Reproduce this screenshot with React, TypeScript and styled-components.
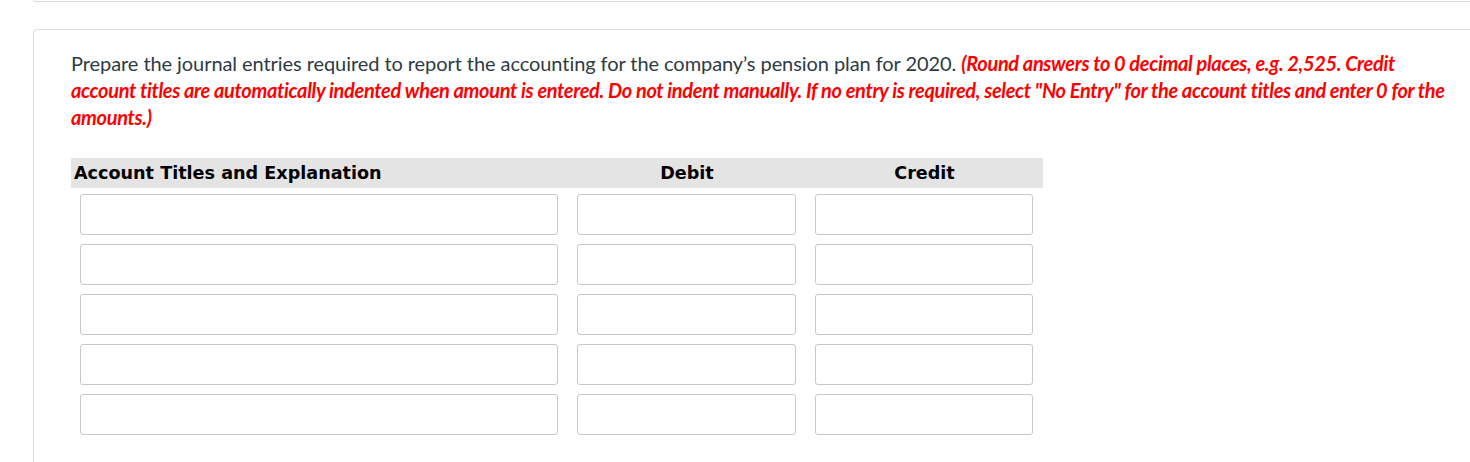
import React from 'react';
import styled, { createGlobalStyle } from 'styled-components';

const GlobalStyle = createGlobalStyle`
  body {
    margin: 0;
    background: #fff;
    overflow: hidden;
    font-family: Lato, "Liberation Sans", sans-serif;
  }
`;

const Page = styled.div`
  width: 1470px;
  height: 462px;
  overflow: hidden;
`;

const PrevCard = styled.div`
  margin-left: 33px;
  width: 1460px;
  height: 1px;
  border: 1px solid #dcdcdc;
  border-top: none;
  border-radius: 0 0 4px 4px;
`;

const Card = styled.div`
  margin: 27px 0 0 33px;
  width: 1460px;
  height: 460px;
  border: 1px solid #dcdcdc;
  border-radius: 4px;
  padding: 20px 0 0 37px;
  box-sizing: border-box;
`;

const Prompt = styled.p`
  margin: 0 0 27px;
  width: 1392px;
  font-size: 20px;
  line-height: 27px;
  letter-spacing: -0.07px;
  color: #2d3b45;
`;

const Note = styled.span`
  color: #f00;
  font-weight: 700;
  font-style: italic;
  letter-spacing: -0.35px;
`;

const Grid = styled.div`
  display: grid;
  grid-template-columns: 497px 238px 237px;
  width: 972px;
`;

const HeadCell = styled.div<{ $align?: 'left' | 'center' }>`
  height: 30px;
  line-height: 31px;
  background: #e4e4e4;
  padding-left: ${({ $align }) => ($align === 'left' ? '3px' : '0')};
  text-align: ${({ $align }) => $align || 'center'};
  font-family: "DejaVu Sans", Verdana, sans-serif;
  font-weight: 700;
  font-size: 17.6px;
  color: #000;
  margin-bottom: 6px;
`;

const Cell = styled.div`
  padding: 0 10px 9px 9px;
`;

const Field = styled.input`
  display: block;
  width: 100%;
  height: 41px;
  box-sizing: border-box;
  border: 1px solid #c8c8c8;
  border-radius: 3px;
  background: #fff;
  font-family: inherit;
  font-size: 16px;
  outline: none;
`;

const rows = [0, 1, 2, 3, 4];

export default function App() {
  return (
    <Page>
      <GlobalStyle />
      <PrevCard />
      <Card>
        <Prompt>
          Prepare the journal entries required to report the accounting for the company’s pension plan for 2020.{' '}
          <Note>
            (Round answers to 0 decimal places, e.g. 2,525. Credit account titles are automatically indented when
            amount is entered. Do not indent manually. If no entry is required, select "No Entry" for the account
            titles and enter 0 for the amounts.)
          </Note>
        </Prompt>
        <Grid>
          <HeadCell $align="left">Account Titles and Explanation</HeadCell>
          <HeadCell>Debit</HeadCell>
          <HeadCell>Credit</HeadCell>
          {rows.map((r) => (
            <React.Fragment key={r}>
              <Cell>
                <Field type="text" />
              </Cell>
              <Cell>
                <Field type="text" />
              </Cell>
              <Cell>
                <Field type="text" />
              </Cell>
            </React.Fragment>
          ))}
        </Grid>
      </Card>
    </Page>
  );
}
